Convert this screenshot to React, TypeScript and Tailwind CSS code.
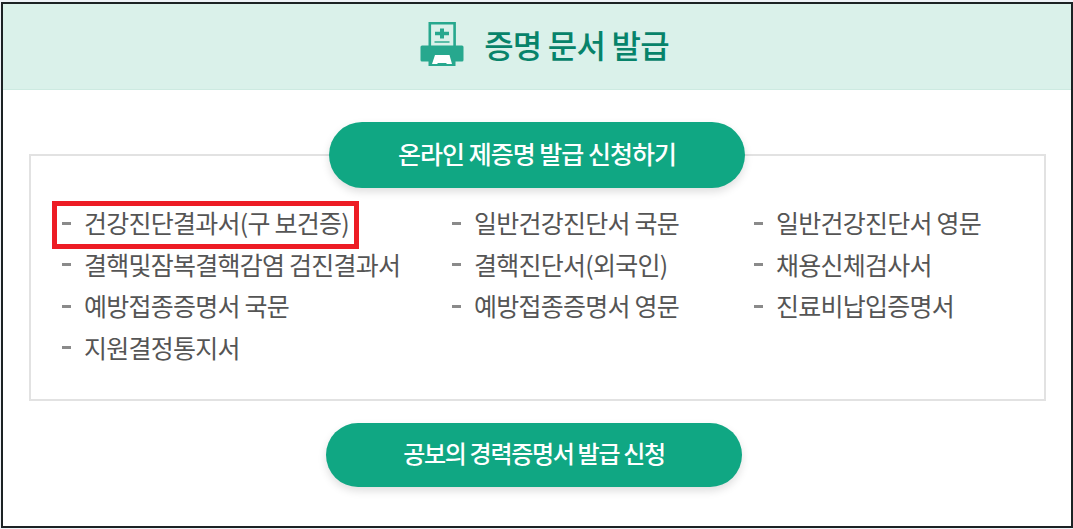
const columns = [
  ["건강진단결과서(구 보건증)", "결핵및잠복결핵감염 검진결과서", "예방접종증명서 국문", "지원결정통지서"],
  ["일반건강진단서 국문", "결핵진단서(외국인)", "예방접종증명서 영문"],
  ["일반건강진단서 영문", "채용신체검사서", "진료비납입증명서"],
];

const PrinterIcon = () => {
  return (
    <svg className="mt-[3px] h-11 w-11 shrink-0" viewBox="0 0 44 44" fill="none">
      <path d="M9.8 26V1.2h24.8V26" stroke="#27a88e" strokeWidth="2.6" />
      <path d="M20 6.5h4v3.2h5v3.6h-5v3.2h-4v-3.2h-5V9.7h5z" fill="#27a88e" />
      <path d="M14.5 20h15" stroke="#5abda7" strokeWidth="2" />
      <path d="M2 23.5h40a1.5 1.5 0 0 1 1.5 1.5v13a1.5 1.5 0 0 1-1.5 1.5h-6.5v4.5h-27v-4.5H2a1.5 1.5 0 0 1-1.5-1.5v-13A1.5 1.5 0 0 1 2 23.5z" fill="#27a88e" />
      <path d="M15 33h14.5l2.5 9h-5l-1-1h-8l-1 1h-5z" fill="#fff" />
    </svg>
  );
};

const PillButton = ({ className, children }: { className: string; children: string }) => {
  return (
    <button
      className={`flex w-[416px] items-center justify-center rounded-full bg-[#10a783] font-medium text-white shadow-[0_4px_8px_rgba(0,0,0,0.13)] ${className}`}
    >
      {children}
    </button>
  );
};

const App = () => {
  return (
    <div className="h-[529px] w-[1073px] bg-[#eef2f7] pt-0.5 pl-px font-['Noto_Sans_CJK_KR',sans-serif]">
      <main className="h-[526px] w-[1072px] border-2 border-[#1c2224] bg-white">
        <header className="flex h-[86px] justify-center border-b border-[#cdeae1] bg-[#daf1ea] pt-[15px] pl-[15px]">
          <div className="flex gap-5">
            <PrinterIcon />
            <h1 className="text-[32px] leading-[50px] font-medium tracking-[-0.8px] whitespace-nowrap text-[#07836a]">증명 문서 발급</h1>
          </div>
        </header>

        <section className="mx-[26px] mt-[64px] h-[247px] w-[1017px] border-2 border-[#e2e2e2]">
          <PillButton className="-mt-[34px] ml-[298px] h-[66px] pb-0.5 text-[25px] tracking-[-1px]">온라인 제증명 발급 신청하기</PillButton>
          <div className="grid grid-cols-[390px_302px_auto] pt-[13px] pl-[21px]">
            {columns.map((items, col) => (
              <ul key={col} className="pl-[10px]">
                {items.map((item, row) => (
                  <li key={item} className="flex h-[41.5px]">
                    <div
                      className={
                        col === 0 && row === 0
                          ? "-ml-[10px] flex h-[48px] w-[307px] shrink-0 border-[5px] border-[#ed1c24] pl-[5px]"
                          : "flex pt-[5px]"
                      }
                    >
                      <span className="mt-[15.5px] mr-[13px] h-[3px] w-[9px] bg-[#8a8a8a]" />
                      <span className="text-[25px] leading-[33px] tracking-[-0.75px] whitespace-nowrap text-[#555]">{item}</span>
                    </div>
                  </li>
                ))}
              </ul>
            ))}
          </div>
        </section>

        <PillButton className="mt-[22px] ml-[323px] h-16 pb-1 text-[24px] tracking-[-1.3px]">공보의 경력증명서 발급 신청</PillButton>
      </main>
    </div>
  );
};

export default App;
